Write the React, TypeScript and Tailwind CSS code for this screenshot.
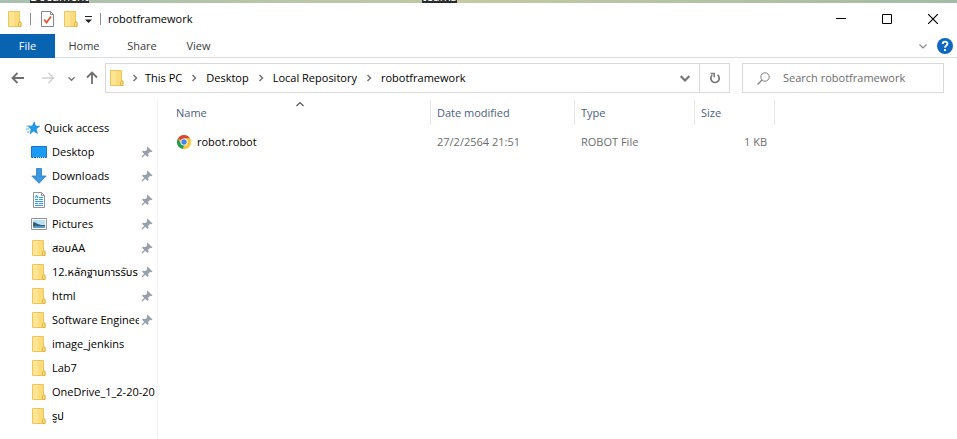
import React from "react";

function FolderIcon() {
  return (
    <svg width="14" height="16" viewBox="0 0 14 16" className="shrink-0" aria-hidden="true">
      <path d="M.5.5h11v10.500h1.500v4.500H.5z" fill="#fbdc7c" stroke="#e9c75c" />
      <path d="M1 1h5v14H1z" fill="#fde595" />
      <path d="M10.500 15.500v-3l1.200-2 1.300 1.500v3.500z" fill="#fbe08a" stroke="#dcb444" />
    </svg>
  );
}

function PinIcon() {
  return (
    <svg width="12" height="12" viewBox="0 0 12 12" className="shrink-0" aria-hidden="true">
      <path d="M6.500.5 11.500 5.500l-1.200.7-1.300-.2L7.200 7.800l.3 2.500-1 .7L1 5.700l.8-1 2.700.3 1.500-1.500-.1-1.800z" fill="#98a2aa" />
      <path d="M4.500 7.500 1 11" stroke="#98a2aa" strokeWidth="1.200" />
    </svg>
  );
}

function StarIcon() {
  return (
    <svg width="14" height="14" viewBox="0 0 14 14" aria-hidden="true">
      <path d="M8.200.8 9.500 5l4.200.2-3.500 2.700 1.200 4.600-3.700-2.400L4 12.800l1.100-4.600L2.300 5.300l4.100-.4z" fill="#1f9bea" stroke="#1780c8" strokeWidth=".6" />
      <path d="M.5 5h3M0 8h3.500M1 11h2.500" stroke="#55b4f0" />
    </svg>
  );
}

function DesktopIcon() {
  return (
    <svg width="16" height="13" viewBox="0 0 16 13" aria-hidden="true">
      <path d="M.5.5h15v11H.5z" fill="#1b9bf5" stroke="#1577c4" />
      <path d="M1 11.500h14" stroke="#0f5c9c" />
      <path d="M2 11.500h1M5 11.500h7M13 11.500h1" stroke="#bfe2fa" strokeDasharray="1 1" />
    </svg>
  );
}

function DownloadIcon() {
  return (
    <svg width="16" height="16" viewBox="0 0 16 16" aria-hidden="true">
      <path d="M5.500.5h5v7.500h4.700L8 15.300.8 8h4.700z" fill="#3a97e0" stroke="#2b7fc6" strokeWidth=".8" />
    </svg>
  );
}

function DocumentIcon() {
  return (
    <svg width="12" height="16" viewBox="0 0 12 16" aria-hidden="true">
      <path d="M.5.5h8l3 3v12H.5z" fill="#fff" stroke="#8d9296" />
      <path d="M8.500.5v3h3" fill="none" stroke="#8d9296" />
      <path d="M2 7.500h3M6 5.500h4M6 7.500h4M2 9.500h8M2 11.500h3M6 11.500h4M2 13.500h8" stroke="#2aa0ee" />
      <path d="m2.500 6 1-3 1.500 3" fill="none" stroke="#1f8fdc" />
    </svg>
  );
}

function PictureIcon() {
  return (
    <svg width="16" height="12" viewBox="0 0 16 12" aria-hidden="true">
      <path d="M.5.5h15v11H.5z" fill="#fff" stroke="#8f9498" />
      <path d="M2 2h12v8H2z" fill="#b9dff5" />
      <path d="M2 4.500c2-1 3 .5 5 1.500s4 1 7 1V10H2z" fill="#35617c" />
      <path d="M2 8.500c4-1 8 .5 12-.5v2H2z" fill="#5f9fd0" />
    </svg>
  );
}

function ChromeIcon() {
  return (
    <svg width="16" height="16" viewBox="0 0 16 16" className="shrink-0" aria-hidden="true">
      <circle cx="8" cy="8" r="7" fill="#f6c42c" />
      <path d="M8 8 1.940 4.500A7 7 0 0 1 14.060 4.500H8z" fill="#dc4437" />
      <path d="M1.940 4.500 5 9.800 8 11l-1.200 3.900A7 7 0 0 1 1.940 4.500z" fill="#1e9d58" />
      <path d="M8 4.500h6.060A7 7 0 0 1 7.500 15L11 9.500z" fill="#f8cb3a" />
      <circle cx="8" cy="8" r="3.500" fill="#fff" />
      <circle cx="8" cy="8" r="2.700" fill="#4484ee" />
    </svg>
  );
}

function Chevron({ d, size = 8, color = "#777", weight = 1.5 }: { d: "up" | "down" | "right"; size?: number; color?: string; weight?: number }) {
  const paths = { up: "M.5 6 4 2.500 7.500 6", down: "M.5 2.500 4 6l3.500-3.500", right: "M2.500 1 5.500 4l-3 3" };
  return (
    <svg width={size} height={size} viewBox="0 0 8 8" className="shrink-0" aria-hidden="true">
      <path d={paths[d]} fill="none" stroke={color} strokeWidth={weight} />
    </svg>
  );
}

function Arrow({ d, color }: { d: "left" | "right" | "up"; color: string }) {
  const paths = {
    left: "M13 7H1.500M6.500 2l-5 5 5 5",
    right: "M1 7h11.500M7.500 2l5 5-5 5",
    up: "M7 13V1.500M2 6.500l5-5 5 5",
  };
  return (
    <svg width="14" height="14" viewBox="0 0 14 14" aria-hidden="true">
      <path d={paths[d]} fill="none" stroke={color} strokeWidth={d === "right" ? 1.5 : 1.8} />
    </svg>
  );
}

const places = [
  { name: "Desktop", icon: <DesktopIcon />, pinned: true },
  { name: "Downloads", icon: <DownloadIcon />, pinned: true },
  { name: "Documents", icon: <DocumentIcon />, pinned: true },
  { name: "Pictures", icon: <PictureIcon />, pinned: true },
  { name: "สอบAA", icon: <FolderIcon />, pinned: true },
  { name: "12.หลักฐานการรับร", icon: <FolderIcon />, pinned: true },
  { name: "html", icon: <FolderIcon />, pinned: true },
  { name: "Software Engineering", icon: <FolderIcon />, pinned: true },
  { name: "image_jenkins", icon: <FolderIcon />, pinned: false },
  { name: "Lab7", icon: <FolderIcon />, pinned: false },
  { name: "OneDrive_1_2-20-2021", icon: <FolderIcon />, pinned: false },
  { name: "รูป", icon: <FolderIcon />, pinned: false },
];

const crumbs = ["This PC", "Desktop", "Local Repository", "robotframework"];

function DesktopStrip() {
  return (
    <div className="flex h-[3px] items-end overflow-hidden bg-linear-to-r from-[#a9c0b0] via-[#c3c9a2] to-[#a3bba6] pl-[30px] text-xs leading-3 text-white">
      <span className="w-[392px] shrink-0"><span className="bg-[#2a2d2b]">Document</span></span>
      <span className="bg-[#2a2d2b]">teams</span>
    </div>
  );
}

function TitleBar() {
  return (
    <header className="flex h-[31px] items-center pl-2">
      <FolderIcon />
      <span className="ml-2 h-3 w-px bg-[#8a8a8a]" />
      <button aria-label="Properties" className="ml-2.5">
        <svg width="13" height="16" viewBox="0 0 13 16" aria-hidden="true">
          <path d="M.5.5h9l3 3v12H.5z" fill="#fff" stroke="#85888b" />
          <path d="M9.500.5v3h3" fill="none" stroke="#85888b" />
          <path d="m3 8.500 2.500 3 4.500-6" fill="none" stroke="#e0572f" strokeWidth="1.800" />
        </svg>
      </button>
      <button aria-label="New folder" className="ml-2.5"><FolderIcon /></button>
      <button aria-label="Customize Quick Access Toolbar" className="ml-[7px]">
        <svg width="7" height="8" viewBox="0 0 7 8" aria-hidden="true">
          <path d="M0 1.500h7" stroke="#222" />
          <path d="M0 4.500h7L3.500 8z" fill="#222" />
        </svg>
      </button>
      <span className="ml-2 h-3 w-px bg-[#8a8a8a]" />
      <h1 className="ml-[7px] flex-1 text-black">robotframework</h1>
      <div className="flex pr-px">
        <button aria-label="Minimize" className="flex h-[30px] w-[46px] items-center justify-center">
          <svg width="10" height="10" viewBox="0 0 10 10" aria-hidden="true"><path d="M0 4.500h10" stroke="#000" /></svg>
        </button>
        <button aria-label="Maximize" className="flex h-[30px] w-[46px] items-center justify-center">
          <svg width="10" height="10" viewBox="0 0 10 10" aria-hidden="true"><path d="M.5.5h9v9h-9z" fill="none" stroke="#000" /></svg>
        </button>
        <button aria-label="Close" className="flex h-[30px] w-[46px] items-center justify-center">
          <svg width="10" height="10" viewBox="0 0 10 10" aria-hidden="true"><path d="m0 0 10 10M10 0 0 10" stroke="#000" strokeWidth="1.200" /></svg>
        </button>
      </div>
    </header>
  );
}

function Ribbon() {
  return (
    <nav className="flex h-6 items-stretch border-b border-[#dadbdc] text-[#3b3b3b]">
      <button className="-mb-px w-[55px] bg-[#0863b1] text-white">File</button>
      <button className="w-[58px]">Home</button>
      <button className="w-[58px]">Share</button>
      <button className="w-[55px]">View</button>
      <div className="ml-auto flex items-center gap-2.5 pr-1">
        <button aria-label="Expand the Ribbon"><Chevron d="down" color="#8a8a8a" weight={1.2} /></button>
        <button aria-label="Help">
          <svg width="16" height="16" viewBox="0 0 16 16" aria-hidden="true">
            <circle cx="8" cy="8" r="8" fill="#0f68c0" />
            <path d="M5.700 6c0-3 4.800-3 4.800-.2C10.500 7.500 8 7.500 8 9.700M8 11v2" fill="none" stroke="#fff" strokeWidth="1.800" />
          </svg>
        </button>
      </div>
    </nav>
  );
}

function AddressBar() {
  return (
    <div className="flex h-[40px] items-center pr-[13px]">
      <div className="flex w-[105px] shrink-0 items-center pl-[11px]">
        <button aria-label="Back"><Arrow d="left" color="#6f6f6f" /></button>
        <button aria-label="Forward" disabled className="ml-4"><Arrow d="right" color="#cfcfcf" /></button>
        <button aria-label="Recent locations" className="ml-[13px]"><Chevron d="down" size={7} color="#777" /></button>
        <button aria-label="Up" className="ml-2.5"><Arrow d="up" color="#6f6f6f" /></button>
      </div>
      <div className="flex h-[30px] min-w-0 flex-1 items-stretch border border-[#d9d9d9] text-black">
        <div className="flex min-w-0 flex-1 items-center pl-1">
          <FolderIcon />
          {crumbs.map((c, i) => (
            <React.Fragment key={c}>
              <span className={i === 0 ? "flex w-[21px] shrink-0 justify-center" : "flex w-6 shrink-0 justify-center"}><Chevron d="right" size={8} /></span>
              <button className="whitespace-nowrap">{c}</button>
            </React.Fragment>
          ))}
        </div>
        <button aria-label="Previous locations" className="flex w-7 items-center justify-center"><Chevron d="down" size={10} weight={1.800} /></button>
        <button aria-label="Refresh" className="flex w-[30px] items-center justify-center border-l border-[#d9d9d9]">
          <svg width="12" height="12" viewBox="0 0 12 12" aria-hidden="true">
            <path d="M8.500 2.900A4.200 4.200 0 1 1 3.200 3.200" fill="none" stroke="#777" strokeWidth="1.700" />
            <path d="M1.500 1.500h3.700v3.700" fill="none" stroke="#777" strokeWidth="1.500" />
          </svg>
        </button>
      </div>
      <label className="ml-3 flex h-[30px] w-[202px] shrink-0 items-center border border-[#d9d9d9] pl-3.5">
        <svg width="13" height="13" viewBox="0 0 13 13" className="shrink-0" aria-hidden="true">
          <circle cx="8" cy="5" r="4.200" fill="none" stroke="#808080" />
          <path d="M5 8 .5 12.500" stroke="#808080" strokeWidth="1.200" />
        </svg>
        <input type="search" aria-label="Search robotframework" placeholder="Search robotframework" className="ml-[13px] min-w-0 flex-1 bg-transparent outline-none placeholder:text-[#6d6d6d]" />
      </label>
    </div>
  );
}

function Sidebar() {
  return (
    <aside className="w-[158px] shrink-0 border-r border-[#f3f3f3] pt-[18px] text-black">
      <a href="#quick" className="flex h-6 items-center gap-1 pl-[26px]"><StarIcon />Quick access</a>
      <ul>
        {places.map((p) => (
          <li key={p.name}>
            <a href="#place" className="flex h-6 items-center pl-[31px] pr-0.5">
              <span className="flex w-4 shrink-0 justify-center">{p.icon}</span>
              <span className="ml-[5px] min-w-0 flex-1 overflow-hidden whitespace-nowrap">{p.name}</span>
              {p.pinned && <span className="ml-0.5 mr-0.5"><PinIcon /></span>}
            </a>
          </li>
        ))}
      </ul>
    </aside>
  );
}

function FileList() {
  return (
    <main className="min-w-0 flex-1 pt-0.5">
      <table className="w-[617px] table-fixed border-separate border-spacing-0 text-left">
        <colgroup>
          <col className="w-[273px]" />
          <col className="w-[144px]" />
          <col className="w-[120px]" />
          <col className="w-[80px]" />
        </colgroup>
        <thead className="text-[#4c607a]">
          <tr className="h-[25px]">
            <th className="relative border-r border-[#e5e5e5] p-0 pl-[18px] font-normal">
              Name
              <span className="absolute left-[138px] top-0"><Chevron d="up" color="#555" weight={1.2} /></span>
            </th>
            <th className="border-r border-[#e5e5e5] p-0 pl-1.5 font-normal">Date modified</th>
            <th className="border-r border-[#e5e5e5] p-0 pl-1.5 font-normal">Type</th>
            <th className="border-r border-[#e5e5e5] p-0 pl-1.5 font-normal">Size</th>
          </tr>
        </thead>
        <tbody className="text-[#6d6d6d]">
          <tr className="h-[34px]">
            <td className="p-0 pl-[18px] text-black"><span className="flex items-center gap-[5px]"><ChromeIcon />robot.robot</span></td>
            <td className="p-0 pl-1.5">27/2/2564 21:51</td>
            <td className="p-0 pl-1.5">ROBOT File</td>
            <td className="p-0 pr-2 text-right">1 KB</td>
          </tr>
        </tbody>
      </table>
    </main>
  );
}

export default function App() {
  return (
    <div className="flex min-h-screen flex-col bg-white font-['Open_Sans','Noto_Sans_Thai',sans-serif] text-[11px] leading-4">
      <DesktopStrip />
      <TitleBar />
      <Ribbon />
      <AddressBar />
      <div className="flex flex-1">
        <Sidebar />
        <FileList />
      </div>
    </div>
  );
}
